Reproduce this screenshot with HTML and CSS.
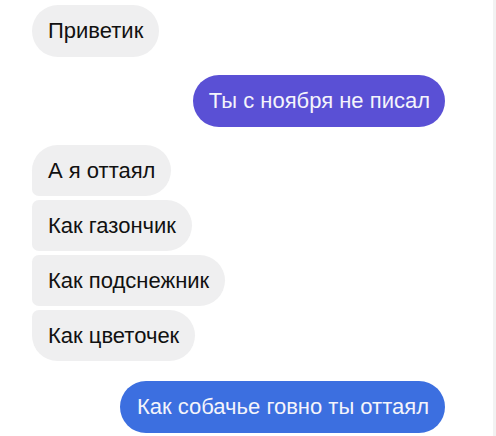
FILE: index.html
```html
<!DOCTYPE html>
<html lang="ru">
<head>
<meta charset="utf-8">
<link rel="stylesheet" href="styles.css">
</head>
<body>
<div class="chat">
  <div class="msg in single">Приветик</div>
  <div class="msg out purple">Ты с ноября не писал</div>
  <div class="group">
    <div class="msg in first">А я оттаял</div>
    <div class="msg in mid">Как газончик</div>
    <div class="msg in mid">Как подснежник</div>
    <div class="msg in last">Как цветочек</div>
  </div>
  <div class="msg out blue">Как собачье говно ты оттаял</div>
</div>
</body>
</html>
```

FILE: styles.css
```css
html, body {
  margin: 0;
  padding: 0;
  background: #ffffff;
}
.chat {
  width: 496px;
  height: 436px;
  box-sizing: border-box;
  padding: 5px 48px 0 32px;
  display: flex;
  flex-direction: column;
  border-right: 3px solid #f2f2f2;
  font-family: "Liberation Sans", Arial, sans-serif;
  font-size: 22px;
}
.msg {
  height: 52px;
  line-height: 52px;
  padding: 0 16px;
  border-radius: 26px;
  white-space: nowrap;
  box-sizing: border-box;
}
.in {
  align-self: flex-start;
  background: #efeff0;
  color: #111111;
}
.out {
  align-self: flex-end;
  color: #f4f4fb;
}
.purple {
  background: #5a50d5;
  margin-top: 18px;
  padding: 0 15px 0 16px;
}
.blue {
  background: #3c6fe0;
  margin-top: 20px;
  padding: 0 16px 0 17px;
}
.group {
  display: flex;
  flex-direction: column;
  align-items: flex-start;
  gap: 4px;
  margin-top: 18px;
}
.group .msg {
  height: 51px;
  line-height: 51px;
}
.first { border-radius: 26px 26px 26px 7px; }
.mid { border-radius: 7px 26px 26px 7px; }
.last { border-radius: 7px 26px 26px 26px; }
```
